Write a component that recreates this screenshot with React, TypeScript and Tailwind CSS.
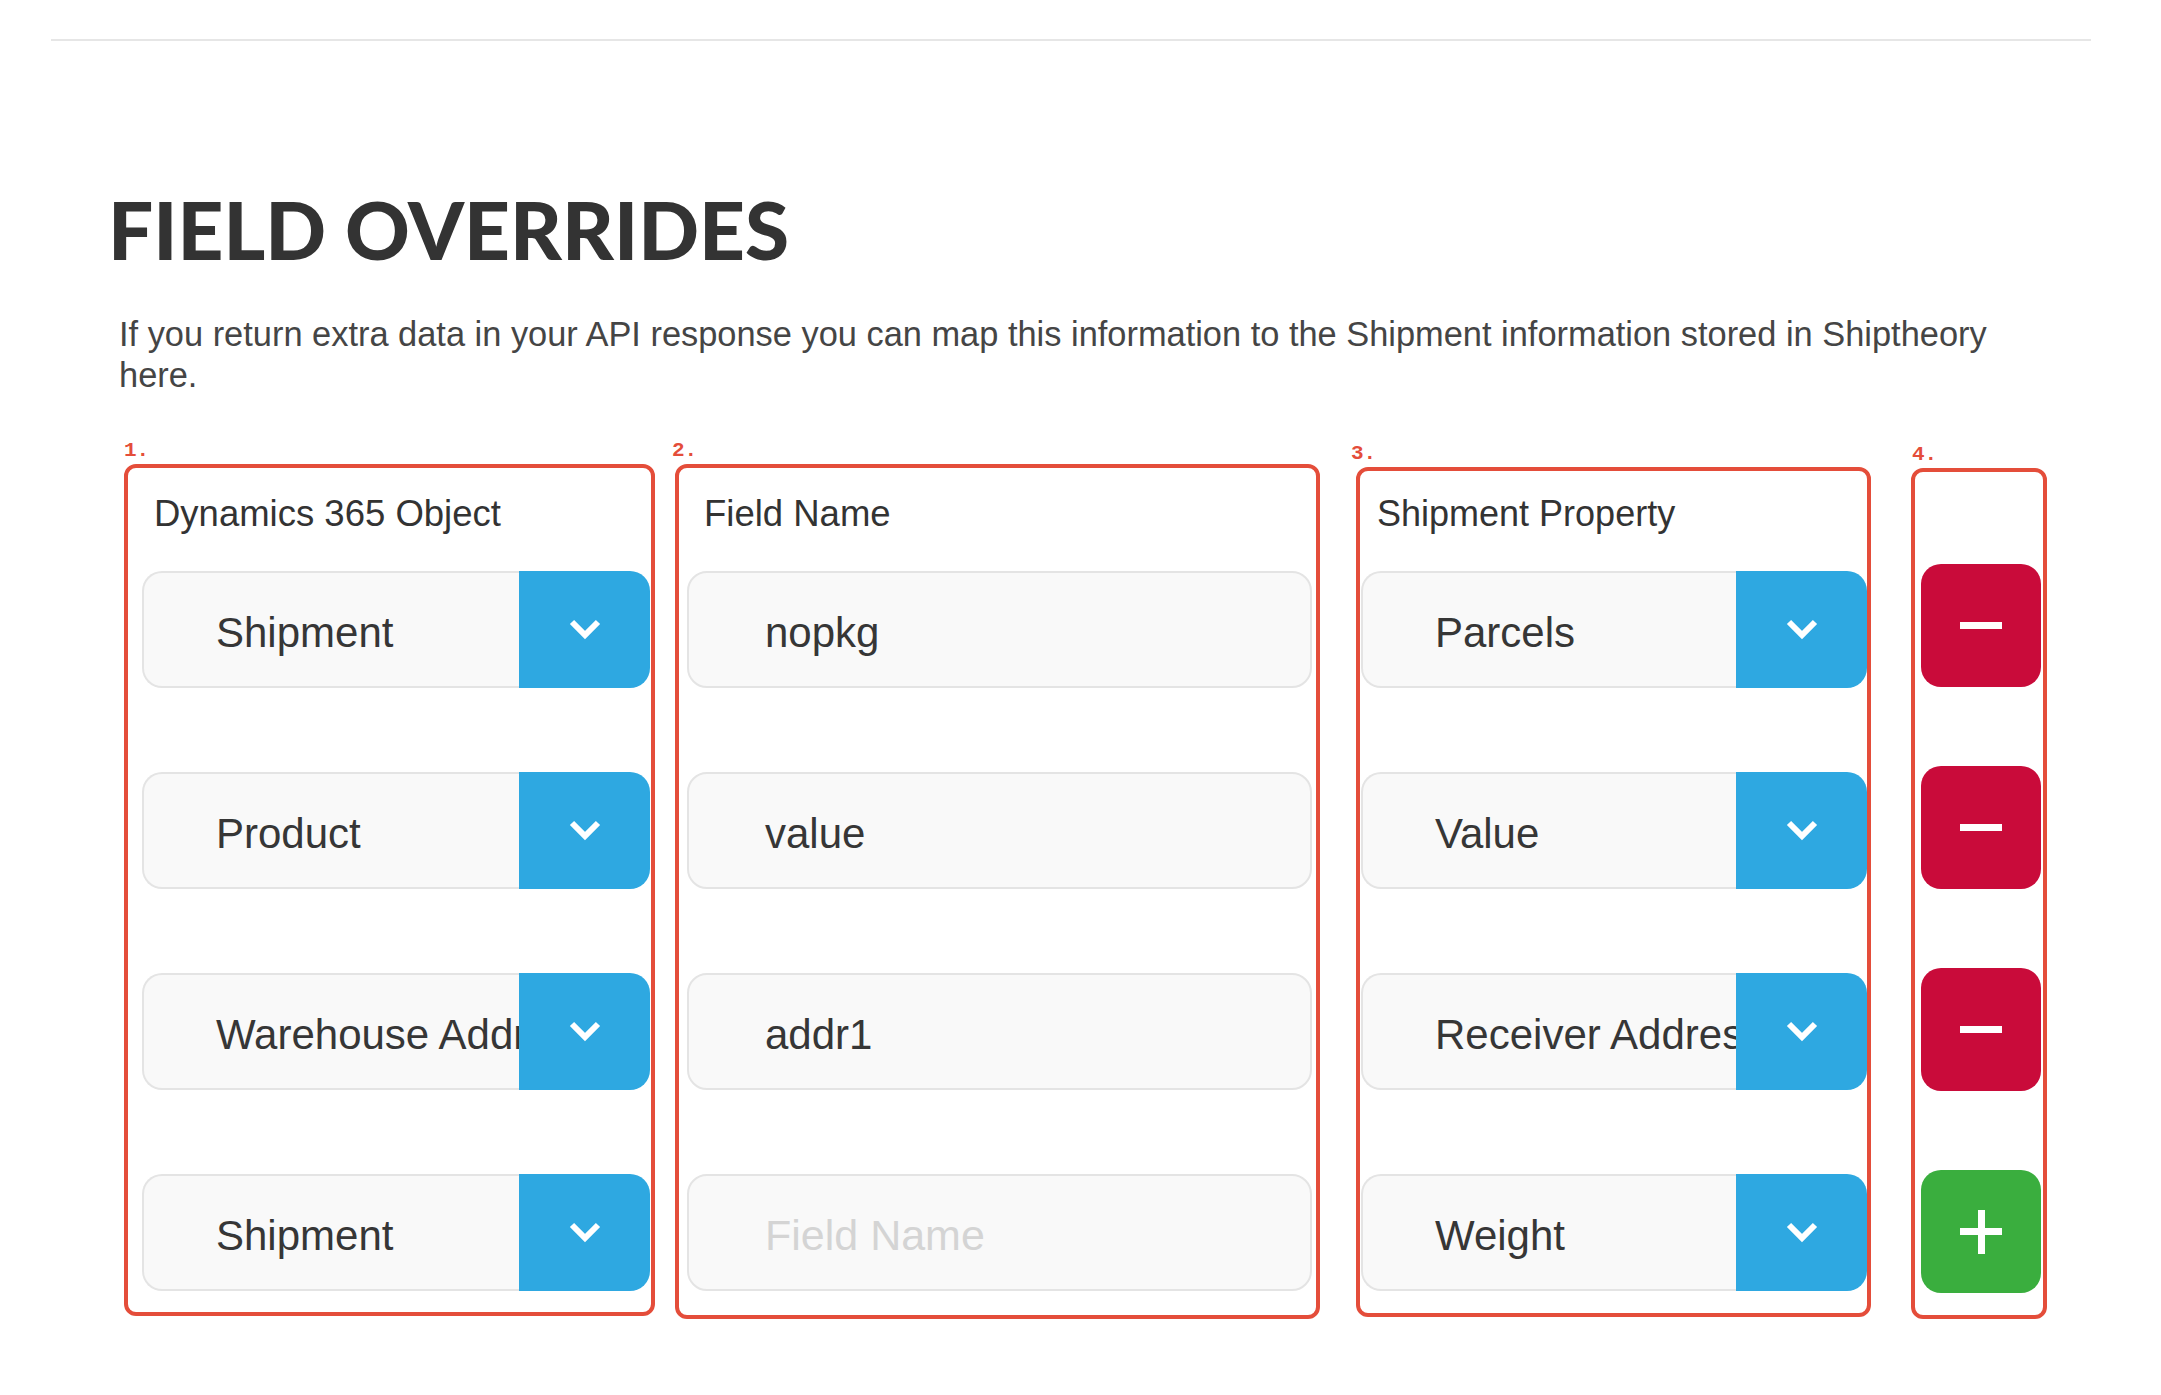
import React from "react";

const RED = "border-[#e44d3a]";

function Chevron() {
  return (
    <svg width="32" height="22" viewBox="0 0 32 22" fill="none">
      <polyline points="3,3 16,16 29,3" stroke="#ffffff" strokeWidth="6" strokeLinejoin="miter" />
    </svg>
  );
}

function Select({ value }: { value: string }) {
  return (
    <div className="flex h-[117px]">
      <div className="flex-1 min-w-0 flex items-center pt-[6px] pl-[72px] overflow-hidden rounded-l-[20px] border-y-2 border-l-2 border-[#e4e4e4] bg-[#f9f9f9]">
        <span className="whitespace-nowrap text-[42px] text-[#363636]">{value}</span>
      </div>
      <div className="w-[131px] shrink-0 flex items-center justify-center rounded-r-[20px] bg-[#2ea8e1]">
        <Chevron />
      </div>
    </div>
  );
}

function TextInput({ value, placeholder }: { value?: string; placeholder?: string }) {
  return (
    <div className="flex h-[117px] items-center pt-[6px] pl-[76px] rounded-[20px] border-2 border-[#e4e4e4] bg-[#f9f9f9]">
      {value ? (
        <span className="whitespace-nowrap text-[42px] text-[#363636]">{value}</span>
      ) : (
        <span className="whitespace-nowrap text-[43px] text-[#d4d4d4]">{placeholder}</span>
      )}
    </div>
  );
}

function Label({ n, className }: { n: string; className?: string }) {
  return (
    <div
      className={"h-[20px] text-[21px] leading-[20px] font-bold text-[#e44d3a] mb-[3px] " + (className ?? "")}
      style={{ fontFamily: '"Liberation Mono", "DejaVu Sans Mono", monospace' }}
    >
      {n}
    </div>
  );
}

export default function App() {
  return (
    <div
      className="min-h-screen bg-white"
      style={{ fontFamily: '"Liberation Sans", Arial, sans-serif' }}
    >
      <div className="pt-[39px] pl-[51px] pr-[70px]">
        <div className="h-[2px] bg-[#e6e6e6]" />
      </div>

      <h1
        className="ml-[108px] mt-[148px] text-[80px] leading-[80px] font-black text-[#333333] whitespace-nowrap"
        style={{ fontFamily: 'Lato, "Liberation Sans", sans-serif' }}
      >
        FIELD OVERRIDES
      </h1>

      <p className="ml-[119px] mt-[45px] text-[34.4px] leading-[41px] text-[#454545] whitespace-nowrap">
        If you return extra data in your API response you can map this information to the Shipment information stored in Shiptheory
        <br />
        here.
      </p>

      <div className="flex items-start pl-[124px] mt-[45px]">
        {/* Column 1 */}
        <div className="w-[531px] shrink-0">
          <Label n="1." />
          <div className={"h-[852px] rounded-[12px] border-4 " + RED + " pl-[14px] pr-[1px] pt-[24px]"}>
            <div className="pl-[12px] h-[44px] text-[36.5px] leading-[44px] text-[#333333] whitespace-nowrap">
              Dynamics 365 Object
            </div>
            <div className="mt-[35px] flex flex-col gap-[84px]">
              <Select value="Shipment" />
              <Select value="Product" />
              <Select value="Warehouse Address" />
              <Select value="Shipment" />
            </div>
          </div>
        </div>

        {/* Column 2 */}
        <div className="w-[645px] shrink-0 ml-[20px]">
          <Label n="2." className="-ml-[3px]" />
          <div className={"h-[855px] rounded-[12px] border-4 " + RED + " pl-[8px] pr-[4px] pt-[24px]"}>
            <div className="pl-[17px] h-[44px] text-[36.5px] leading-[44px] text-[#333333] whitespace-nowrap">
              Field Name
            </div>
            <div className="mt-[35px] flex flex-col gap-[84px]">
              <TextInput value="nopkg" />
              <TextInput value="value" />
              <TextInput value="addr1" />
              <TextInput placeholder="Field Name" />
            </div>
          </div>
        </div>

        {/* Column 3 */}
        <div className="w-[515px] shrink-0 ml-[36px] mt-[3px]">
          <Label n="3." className="-ml-[5px]" />
          <div className={"h-[850px] rounded-[12px] border-4 " + RED + " pl-[1px] pr-0 pt-[21px]"}>
            <div className="pl-[16px] h-[44px] text-[36px] leading-[44px] text-[#333333] whitespace-nowrap">
              Shipment Property
            </div>
            <div className="mt-[35px] flex flex-col gap-[84px]">
              <Select value="Parcels" />
              <Select value="Value" />
              <Select value="Receiver Address" />
              <Select value="Weight" />
            </div>
          </div>
        </div>

        {/* Column 4 */}
        <div className="w-[136px] shrink-0 ml-[40px] mt-[4px]">
          <Label n="4." className="ml-[1px]" />
          <div className={"h-[851px] rounded-[12px] border-4 " + RED + " pl-[6px] pr-[2px] pt-[92px]"}>
            <div className="flex flex-col gap-[79px]">
              {[0, 1, 2].map((i) => (
                <div key={i} className="h-[123px] w-[120px] rounded-[20px] bg-[#c90b3a] flex items-center justify-center">
                  <div className="w-[42px] h-[7px] bg-white" />
                </div>
              ))}
              <div className="relative h-[123px] w-[120px] rounded-[20px] bg-[#3aae3e] flex items-center justify-center">
                <div className="absolute w-[42px] h-[7px] bg-white" />
                <div className="absolute w-[7px] h-[44px] bg-white" />
              </div>
            </div>
          </div>
        </div>
      </div>
    </div>
  );
}
